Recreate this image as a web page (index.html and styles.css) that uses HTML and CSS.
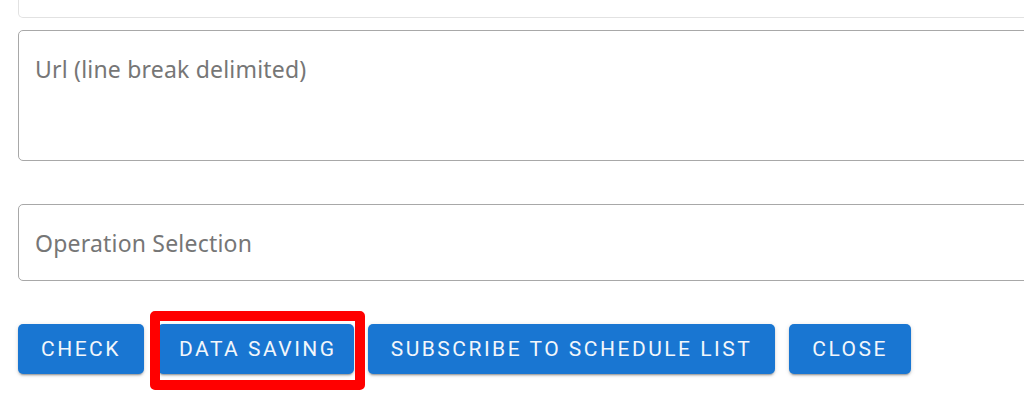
FILE: index.html
```html
<!DOCTYPE html>
<html lang="en">
<head>
<meta charset="utf-8">
<title>Form</title>
<link rel="stylesheet" href="styles.css">
</head>
<body>
<div class="page">
  <div class="field field-top"></div>
  <div class="field field-url"><span class="placeholder">Url (line break delimited)</span></div>
  <div class="field field-select"><span class="placeholder">Operation Selection</span></div>
  <div class="actions">
    <button class="btn btn-check">CHECK</button>
    <span class="highlight-wrap">
      <button class="btn btn-save">DATA SAVING</button>
      <span class="highlight"></span>
    </span>
    <button class="btn btn-subscribe">SUBSCRIBE TO SCHEDULE LIST</button>
    <button class="btn btn-close">CLOSE</button>
  </div>
</div>
</body>
</html>
```

FILE: styles.css
```css
html {
  overflow: hidden;
}
body {
  margin: 0;
  padding: 0;
  background: #ffffff;
}
.page {
  width: 1200px;
  padding-left: 18px;
  padding-bottom: 30px;
  display: flex;
  flex-direction: column;
  align-items: flex-start;
}
.field {
  width: 1100px;
  box-sizing: border-box;
  border: 1px solid #a8a8a8;
  border-radius: 5px;
  background: #fff;
}
.field-top {
  height: 18px;
  border: 1px solid #e2e2e2;
  border-top: none;
  border-radius: 0 0 5px 5px;
}
.field-url {
  margin-top: 12px;
  height: 131px;
  padding: 23px 0 0 16px;
}
.field-select {
  margin-top: 43px;
  height: 77px;
  padding: 23px 0 0 16px;
}
.placeholder {
  font-family: "Noto Sans", "Noto Sans CJK JP", sans-serif;
  font-size: 23px;
  letter-spacing: 0.2px;
  line-height: 30px;
  color: #767676;
}
.actions {
  margin-top: 43px;
  display: flex;
  gap: 14px;
  align-items: center;
}
.btn {
  height: 50px;
  padding: 0 23px;
  border: none;
  border-radius: 5px;
  background: #1976d2;
  color: #f2f6fb;
  font-family: Roboto, "Liberation Sans", sans-serif;
  font-weight: 400;
  font-size: 21px;
  letter-spacing: 2.5px;
  box-shadow: 0 3px 1px -2px rgba(0,0,0,.2), 0 2px 2px 0 rgba(0,0,0,.14), 0 1px 5px 0 rgba(0,0,0,.12);
  display: flex;
  align-items: center;
  justify-content: center;
}
.btn-save {
  padding: 0 17px 0 21px;
}
.highlight-wrap {
  position: relative;
  display: flex;
}
.highlight {
  position: absolute;
  left: -8px;
  right: -11px;
  top: -13px;
  bottom: -16px;
  border: 10px solid #ff0000;
  border-radius: 5px;
  pointer-events: none;
}
```
